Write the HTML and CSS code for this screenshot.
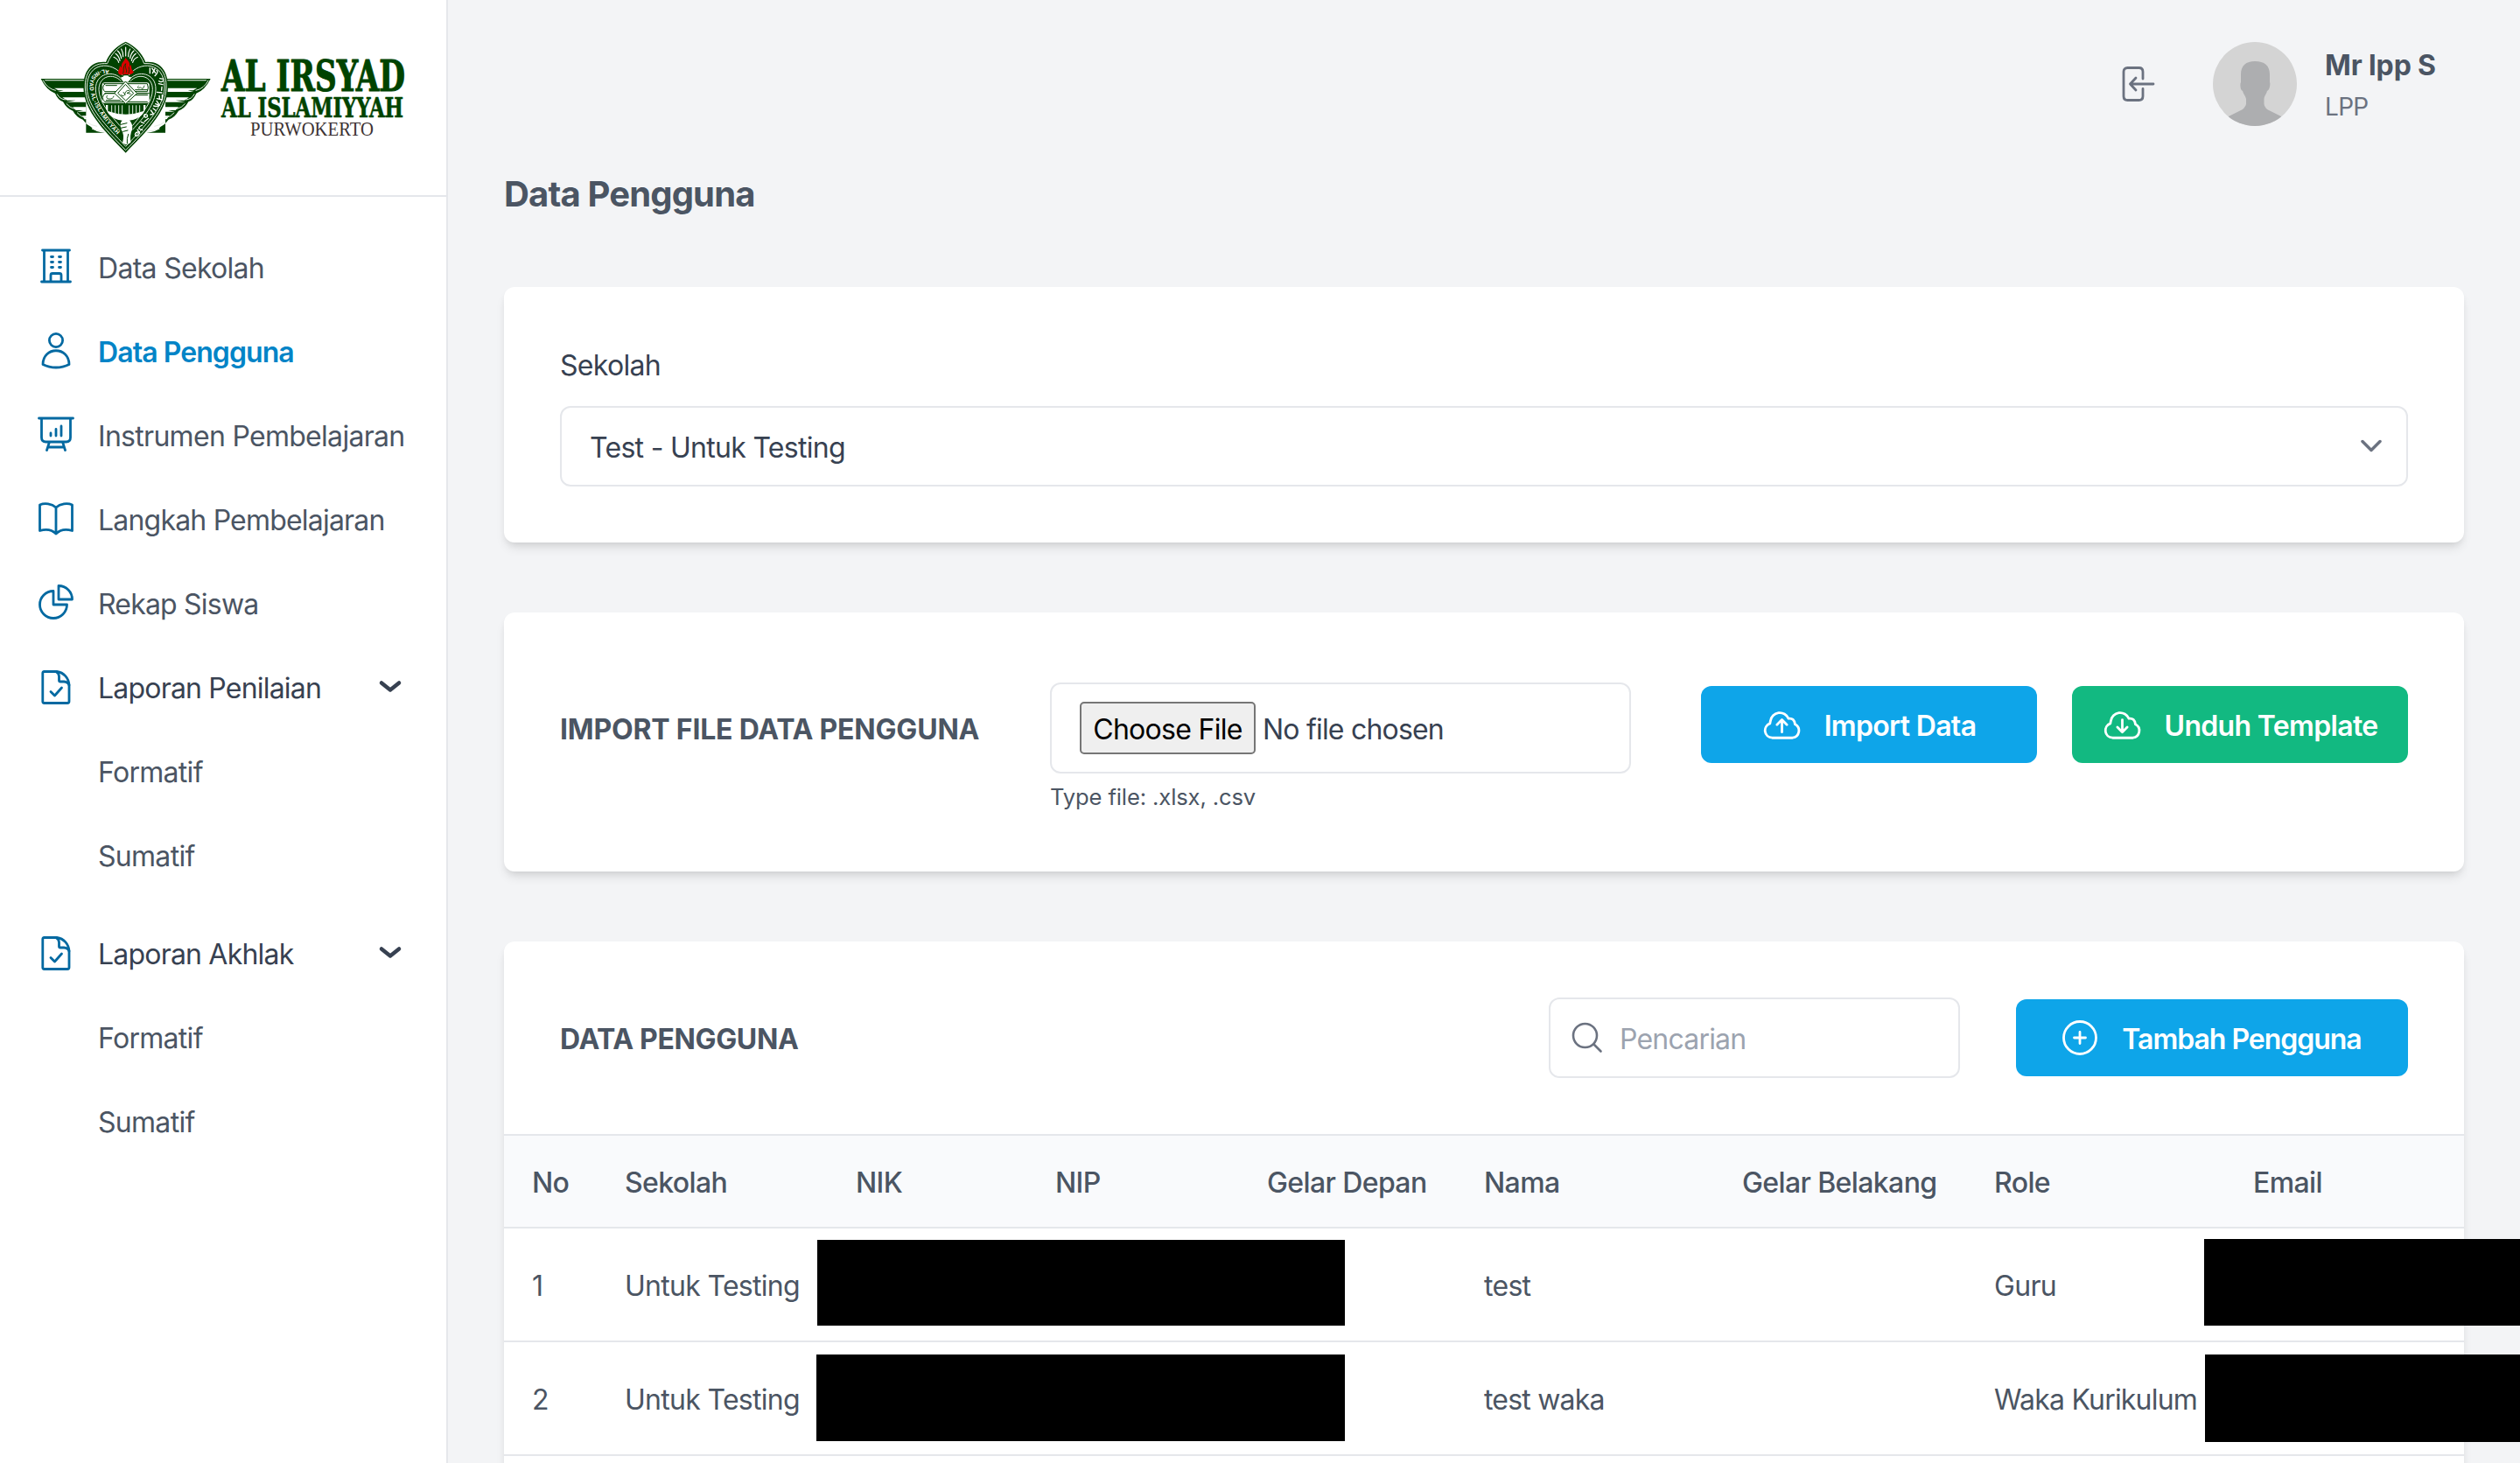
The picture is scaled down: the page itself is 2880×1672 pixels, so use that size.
FILE: index.html
```html
<!DOCTYPE html>
<html lang="id">
<head>
<meta charset="utf-8">
<title>Data Pengguna</title>
<link rel="stylesheet" href="styles.css">
</head>
<body>
<svg class="defs" width="0" height="0" aria-hidden="true">
  <defs>
    <symbol id="i-file" viewBox="0 0 48 48">
      <path d="M10.500 6.500H25C33 7.500 38.500 14 39 22V40.500Q39 42.500 37 42.500H10.500Q8.800 42.500 8.800 40.500V8.500Q8.800 6.500 10.500 6.500Z"/>
      <path d="M24 6.800Q27.300 8 27.500 12V16.500Q27.500 18 29 18H33Q38 18.500 39 22"/>
      <path d="M18 29.500L22.500 34L30.500 25"/>
    </symbol>
    <symbol id="i-down" viewBox="0 0 28 18">
      <path d="M4 4.500L14 12.500L24 4.500"/>
    </symbol>
    <symbol id="i-cloud" viewBox="0 0 48 40">
      <path d="M12 36.500A9 9 0 0 1 9.500 19A12.500 12.500 0 0 1 10 16A11.500 11.500 0 0 1 32 13Q39 12 40 20A8.800 8.800 0 0 1 37 36.500Z"/>
    </symbol>
    <g id="wing">
      <path class="g" d="M20 150H175V335H240Q205 334 192 315Q175 306 164 290Q142 282 130 260Q108 252 96 229Q78 222 69 200Q40 190 20 150Z"/>
      <path class="w" d="M32 154H175V157H36ZM66 182H175V195H78L98 190H80ZM94 214H175V230H106L140 224H110ZM130 247H175V263H143L165 258H140ZM162 277H190V294H178L188 289H170ZM190 306H215V322H208L200 316Z"/>
      <path class="wl" d="M28 156Q42 184 70 190M76 203Q84 220 104 222M108 236Q118 250 138 254M145 267Q155 281 176 284M178 298Q190 310 212 313M196 322Q215 330 240 330"/>
    </g>
  </defs>
</svg>
<div class="app">
  <aside class="sidebar">
    <div class="brand">
      <svg class="emblem" viewBox="0 0 630 432">
        <use href="#wing"/>
        <use href="#wing" transform="matrix(-1 0 0 1 622 0)"/>
        <path class="g" d="M311 23C282 35 254 62 243 93C188 88 165 130 166 180C168 262 240 330 311 404C382 330 454 262 456 180C457 130 434 88 379 93C368 62 340 35 311 23Z"/>
        <path class="wl" d="M311 29C286 40 260 65 248 98C192 94 171 132 172 180C174 258 243 325 311 395C379 325 448 258 450 180C451 132 430 94 374 98C362 65 336 40 311 29Z"/>
        <path class="wl" d="M300 138C265 88 178 90 178 180C180 248 245 312 311 382C377 312 442 248 444 180C444 90 357 88 322 138"/>
        <path class="wl" d="M298 152C270 118 207 130 208 186C209 238 250 284 290 328M324 152C352 118 415 130 414 186C413 238 372 284 335 324"/>
        <path class="wl" d="M295 158C268 128 218 140 219 188C220 228 250 264 290 310M327 158C354 128 404 140 403 188C402 228 372 264 335 310"/>
        <path class="rays" d="M311 72V42M302 74Q302 58 296 48M320 74Q320 58 326 48M296 80Q294 64 283 54M326 80Q328 64 339 54M291 88Q288 72 276 64M331 88Q334 72 346 64M287 94Q284 82 270 76M335 94Q338 82 352 76"/>
        <path class="red" d="M311 77C315 88 327 88 324 107L329 102C331 112 330 119 339 127C334 137 320 136 311 134C302 137 290 139 286 131C283 120 292 116 290 105L297 112C293 96 306 91 311 77Z"/>
        <path class="gl thin" d="M302 132C307 116 299 112 311 98C306 114 318 119 313 128M321 131C326 120 321 116 322 110"/>
        <path class="w" d="M295 143Q302 147 305 139H318Q322 147 330 143Q327 156 319 161H303Q296 155 295 143Z"/>
        <rect class="w" x="230" y="163" width="162" height="70" rx="9"/>
        <path class="gl" d="M236 167H385Q391 180 385 194H240Q234 192 233 181Q233 170 240 168M240 200H391M385 229H240Q232 225 232 214Q233 202 243 200H385M243 173H280M344 188H385M244 224H292M342 206H386"/>
        <path class="gl thin" d="M355 175Q347 180 355 182Q363 176 366 184Q372 186 375 174M247 208Q241 218 254 219Q268 220 270 210"/>
        <path class="w gl" d="M311 160L350 200L311 236L273 200Z"/>
        <path class="gl" d="M311 170L338 200L311 225L285 200Z"/>
        <path class="gl thin" d="M296 205Q298 214 308 205Q309 189 323 190Q330 196 315 199L328 202M303 196L309 205"/>
        <path class="w" d="M243 240H379C382 312 240 312 243 240Z"/>
        <path class="g" d="M250 239H372V261Q311 283 250 261Z"/>
        <path class="wl" d="M263 242V265M275 242V268M287 242V270M299 242V272M323 242V272M335 242V270M347 242V268M359 242V265"/>
        <path class="w" d="M294 300L302 289L322 290Q337 304 333 325Q325 340 328 370L311 376L300 370Q308 342 296 325Q290 312 294 300Z"/>
        <path class="gl" d="M294 307L315 302M294 319L313 315M302 331L318 327M320 340Q314 355 316 371"/>
        <path id="ring-left" class="none" d="M254 120C210 112 182 145 188 184C196 245 242 302 296 356"/>
        <text class="ring"><textPath href="#ring-left" textLength="296">AL-IRSYAD AL-ISLAMIYYAH</textPath></text>
        <path class="wl script" d="M394 113V131M401 114L413 130M411 116L403 131M417 121Q425 127 411 140M428 149L440 151M425 158Q433 164 439 157M424 167L438 170M435 178L434 190M435 198L418 196M436 205V222L418 218M426 208L427 218M417 226L424 236M413 236L427 241Q421 247 407 243M405 252L414 259M397 258L406 270L396 273M377 272Q370 277 377 282Q388 283 385 274L377 272M389 286L375 297M374 303L364 298M368 309Q356 314 356 321L368 326M351 324L359 337M352 333Q341 335 344 345Q355 348 357 338"/>
      </svg>
      <svg class="wordmark" viewBox="0 0 214 100">
        <text class="wm-a" x="1" y="41" textLength="210" lengthAdjust="spacingAndGlyphs">AL IRSYAD</text>
        <text class="wm-b" x="1" y="71" textLength="208" lengthAdjust="spacingAndGlyphs">AL ISLAMIYYAH</text>
        <text class="wm-c" x="34" y="92" textLength="141" lengthAdjust="spacingAndGlyphs">PURWOKERTO</text>
      </svg>
    </div>
    <nav class="nav">
      <a class="item"><svg class="ico" viewBox="0 0 48 48"><path d="M8.500 5H39.500M7.500 41H40.500M10.500 5V41M37.500 5V41M18 41V33.500Q18 31.500 20 31.500H28Q30 31.500 30 33.500V41"/><path d="M18.500 12.500H20.500M27.500 12.500H29.500M18.500 18.500H20.500M27.500 18.500H29.500M18.500 24.500H20.500M27.500 24.500H29.500"/></svg><span>Data Sekolah</span></a>
      <a class="item active"><svg class="ico" viewBox="0 0 48 48"><circle cx="24" cy="12" r="7.600"/><path d="M9 39.500C9 18.500 39 18.500 39 39.500Q32 43 24 43Q16 43 9 39.500Z"/></svg><span>Data Pengguna</span></a>
      <a class="item"><svg class="ico" viewBox="0 0 48 48"><path d="M4.500 5H43.500M7.500 5V27Q7.500 32 12.500 32H35.500Q40.500 32 40.500 27V5M16.500 32L13.500 41.500M31.500 32L34.500 41.500M15 38H33M18 25V22M24 25V17.500M30 25V14"/></svg><span>Instrumen Pembelajaran</span></a>
      <a class="item"><svg class="ico" viewBox="0 0 48 48"><path d="M24 11C19 6.500 11 5.500 5.500 8V37.500C12 35.500 19 36 24 41C29 36 36 35.500 42.500 37.500V8C37 5.500 29 6.500 24 11ZM24 11V41"/></svg><span class="snug">Langkah Pembelajaran</span></a>
      <a class="item"><svg class="ico" viewBox="0 0 48 48"><path d="M21 10.500A15.500 15.500 0 1 0 36.500 26H21ZM27 4.500A15.500 15.500 0 0 1 42.500 20H27Z"/></svg><span class="snug">Rekap Siswa</span></a>
      <a class="item parent"><svg class="ico"><use href="#i-file"/></svg><span class="snug">Laporan Penilaian</span><svg class="chev"><use href="#i-down"/></svg></a>
      <a class="item sub"><span>Formatif</span></a>
      <a class="item sub"><span>Sumatif</span></a>
      <a class="item parent second"><svg class="ico"><use href="#i-file"/></svg><span class="snug">Laporan Akhlak</span><svg class="chev"><use href="#i-down"/></svg></a>
      <a class="item sub"><span>Formatif</span></a>
      <a class="item sub"><span>Sumatif</span></a>
    </nav>
  </aside>
  <main class="main">
    <header class="top">
      <svg class="logout" viewBox="0 0 40 44"><path d="M25 16V8Q25 3.500 20.500 3.500H7.500Q3 3.500 3 8V36Q3 40.500 7.500 40.500H20.500Q25 40.500 25 36V27.500M37 22H10.500M17 15L10.500 22L17 29"/></svg>
      <svg class="avatar" viewBox="0 0 96 96"><clipPath id="round"><circle cx="48" cy="48" r="48"/></clipPath><g clip-path="url(#round)"><rect width="96" height="96" fill="#d4d4d4"/><path fill="#adaeb0" d="M48 22C59 22 65 27 65 37V46C66 47 65 55 62 56C61 60 59 61 58.500 65V71Q59 76 66 79L78 85V96H18V85L30 79Q37 76 38 71V65C37 61 35 60 34 56C31 55 31 47 32 46V37C32 27 38 22 48 22Z"/></g></svg>
      <div class="who"><strong>Mr lpp S</strong><span>LPP</span></div>
    </header>
    <h1>Data Pengguna</h1>
    <section class="card school">
      <label>Sekolah</label>
      <div class="select"><span>Test - Untuk Testing</span><svg class="sel-chev" viewBox="0 0 28 20"><path d="M4 4.500L14 14.500L24 4.500"/></svg></div>
    </section>
    <section class="card import">
      <h2 class="imp-title">IMPORT FILE DATA PENGGUNA</h2>
      <div class="file">
        <div class="filebox"><span class="choose">Choose File</span><span class="nofile">No file chosen</span></div>
        <p class="hint">Type file: .xlsx, .csv</p>
      </div>
      <div class="btns">
        <a class="btn blue"><svg class="cloud" viewBox="0 0 48 40"><use href="#i-cloud"/><path d="M24 29.500V14.500M18 20.500L24 14.500L30 20.500"/></svg><span>Import Data</span></a>
        <a class="btn green"><svg class="cloud" viewBox="0 0 48 40"><use href="#i-cloud"/><path d="M24 14.500V29.500M18 23.500L24 29.500L30 23.500"/></svg><span>Unduh Template</span></a>
      </div>
    </section>
    <section class="card list">
      <div class="bar">
        <h2 class="list-title">DATA PENGGUNA</h2>
        <div class="search"><svg class="mag" viewBox="0 0 36 36"><circle cx="15.500" cy="15.500" r="13.500"/><path d="M25.500 25.500L33.500 33.500"/></svg><span>Pencarian</span></div>
        <a class="btn blue add"><svg class="plus" viewBox="0 0 40 40"><circle cx="20" cy="20" r="18.500"/><path d="M20 13.500V26.500M13.500 20H26.500"/></svg><span>Tambah Pengguna</span></a>
      </div>
      <div class="row head"><span>No</span><span>Sekolah</span><span>NIK</span><span>NIP</span><span>Gelar Depan</span><span>Nama</span><span>Gelar Belakang</span><span>Role</span><span>Email</span></div>
      <div class="row"><span>1</span><span>Untuk Testing</span><span></span><span></span><span></span><span>test</span><span></span><span>Guru</span><span></span><i class="mask m1"></i><i class="mask m2"></i></div>
      <div class="row"><span>2</span><span>Untuk Testing</span><span></span><span></span><span></span><span class="snug">test waka</span><span></span><span class="snug">Waka Kurikulum</span><span></span><i class="mask m3"></i><i class="mask m4"></i></div>
      <div class="row"></div>
    </section>
  </main>
</div>
</body>
</html>
```
FILE: styles.css
```css
* { box-sizing: border-box; margin: 0; padding: 0; }
body { font-family: Inter, "Liberation Sans", sans-serif; font-size: 32px; line-height: 48px; letter-spacing: -0.022em; color: #4b5563; background: #f3f4f6; overflow: hidden; }
svg { flex: none; fill: none; stroke: currentColor; stroke-linecap: round; stroke-linejoin: round; }
span { white-space: nowrap; padding-top: 3px; }
.snug { letter-spacing: -0.025em; }
.defs { position: absolute; }
.app { display: flex; height: 1672px; overflow: hidden; }

.sidebar { width: 512px; flex: none; background: #fff; border-right: 2px solid #e5e7eb; }
.brand { height: 225px; border-bottom: 2px solid #e5e7eb; display: flex; align-items: flex-start; padding: 40px 0 0 40px; }
.emblem { width: 210px; height: 144px; stroke: none; }
.wordmark { width: 214px; height: 100px; margin: 23px 0 0 2px; stroke: none; overflow: visible; }
.g { fill: #004300; }
.w { fill: #fff; }
.wl { fill: none; stroke: #e4ece4; stroke-width: 3; }
.rays { fill: none; stroke: #fff; stroke-width: 3.5; }
.gl { stroke: #004300; stroke-width: 3; }
.thin { fill: none; stroke-width: 2.5; }
path.gl:not(.w) { fill: none; }
.script { stroke: #fff; stroke-width: 4; }
.red { fill: #d90000; }
.none { fill: none; }
.ring { fill: #fff; font: bold 19px "Liberation Sans", sans-serif; letter-spacing: 0; }
.wm-a { fill: #004300; stroke: #004300; stroke-width: 1; font: bold 49px "DejaVu Serif Condensed", "DejaVu Serif", serif; letter-spacing: 0; }
.wm-b { fill: #004300; stroke: #004300; stroke-width: .6; font: bold 32px "DejaVu Serif Condensed", "DejaVu Serif", serif; letter-spacing: 0; }
.wm-c { fill: #3d3333; font: 22.500px "Liberation Serif", serif; letter-spacing: 0; }

.nav { padding-top: 32px; }
.item { display: flex; align-items: center; height: 96px; padding-left: 40px; }
.ico { width: 48px; height: 48px; color: #0369a1; stroke-width: 2.8; margin-right: 24px; }
.active { color: #0284c7; font-weight: 600; letter-spacing: -0.029em; }
.parent { color: #374151; }
.second { margin-top: 16px; }
.sub { padding-left: 112px; }
.chev { width: 28px; height: 18px; margin: 0 50px 0 auto; stroke-width: 4.5; }

.main { flex: 1; padding: 0 64px; }
.top { display: flex; height: 192px; padding-top: 48px; justify-content: flex-end; }
.logout { width: 40px; height: 44px; margin: 26px 65px 0 0; color: #6b7280; stroke-width: 2.8; }
.avatar { width: 96px; height: 96px; stroke: none; }
.who { width: 159px; margin-left: 32px; display: flex; flex-direction: column; }
.who strong { font-weight: 700; line-height: 54px; white-space: nowrap; letter-spacing: -0.004em; }
.who span { font-size: 28px; line-height: 40px; color: #6b7280; margin-top: -3px; }
h1 { font-size: 40px; line-height: 56px; font-weight: 700; padding-top: 2px; margin-bottom: 78px; letter-spacing: -0.021em; }
h2 { font-size: 32px; font-weight: 700; white-space: nowrap; }
.card { background: #fff; border-radius: 12px; box-shadow: 0 8px 12px -2px rgba(0,0,0,.1), 0 4px 8px -4px rgba(0,0,0,.1); margin-bottom: 80px; color: #4b5563; }

.school { height: 292px; padding: 64px; color: #374151; }
.school label { display: block; height: 72px; padding-top: 2px; }
.select { height: 92px; border: 2px solid #e5e7eb; border-radius: 12px; display: flex; align-items: center; justify-content: space-between; padding: 0 26px 0 32px; }
.sel-chev { width: 28px; height: 20px; stroke-width: 3.5; color: #6b7280; }

.import { height: 296px; padding: 0 64px; display: flex; }
.imp-title { width: 560px; margin-top: 110px; letter-spacing: -0.006em; }
.file { width: 664px; margin: 80px 80px 0 0; }
.filebox { height: 104px; border: 2px solid #e5e7eb; border-radius: 12px; display: flex; align-items: center; padding-left: 32px; color: #374151; }
.choose { height: 60px; width: 201px; display: flex; align-items: center; justify-content: center; border: 2px solid #767676; border-radius: 5px; background: #efefef; color: #000; }
.nofile { margin-left: 8px; letter-spacing: -0.025em; }
.hint { font-size: 25.600px; line-height: 38px; margin-top: 8px; letter-spacing: -0.005em; }
.btns { display: flex; gap: 40px; margin-top: 84px; }
.btn { display: flex; align-items: center; justify-content: center; width: 384px; height: 88px; border-radius: 12px; color: #fff; font-weight: 600; letter-spacing: -0.021em; }
.blue { background: #0ea5e9; }
.green { background: #12b981; }
.cloud { width: 45px; height: 37.500px; stroke-width: 3; margin-right: 26px; }

.list { height: 680px; }
.bar { display: flex; align-items: center; height: 220px; padding: 0 64px; }
.list-title { margin-right: auto; padding-top: 3px; letter-spacing: -0.011em; }
.search { width: 470px; height: 92px; border: 2px solid #e5e7eb; border-radius: 12px; display: flex; align-items: center; padding-left: 24px; color: #9ca3af; letter-spacing: -0.025em; }
.mag { width: 36px; height: 36px; stroke-width: 2.6; color: #6b7280; margin-right: 19px; }
.add { width: 448px; margin-left: 64px; letter-spacing: -0.032em; }
.plus { width: 40px; height: 40px; stroke-width: 2.8; margin-right: 28px; }
.row { position: relative; display: grid; grid-template-columns: 106px 264px 228px 242px 248px 295px 288px 296px auto; align-items: center; height: 130px; padding-left: 32px; border-bottom: 2px solid #e5e7eb; }
.head { height: 108px; background: #f9fafc; border-top: 2px solid #e5e7eb; font-weight: 500; letter-spacing: -0.019em; }
.mask { position: absolute; background: #000; }
.m1 { left: 358px; top: 13px; width: 603px; height: 98px; }
.m2 { left: 1943px; top: 12px; width: 400px; height: 99px; }
.m3 { left: 357px; top: 14px; width: 604px; height: 99px; }
.m4 { left: 1944px; top: 14px; width: 400px; height: 100px; }
```
